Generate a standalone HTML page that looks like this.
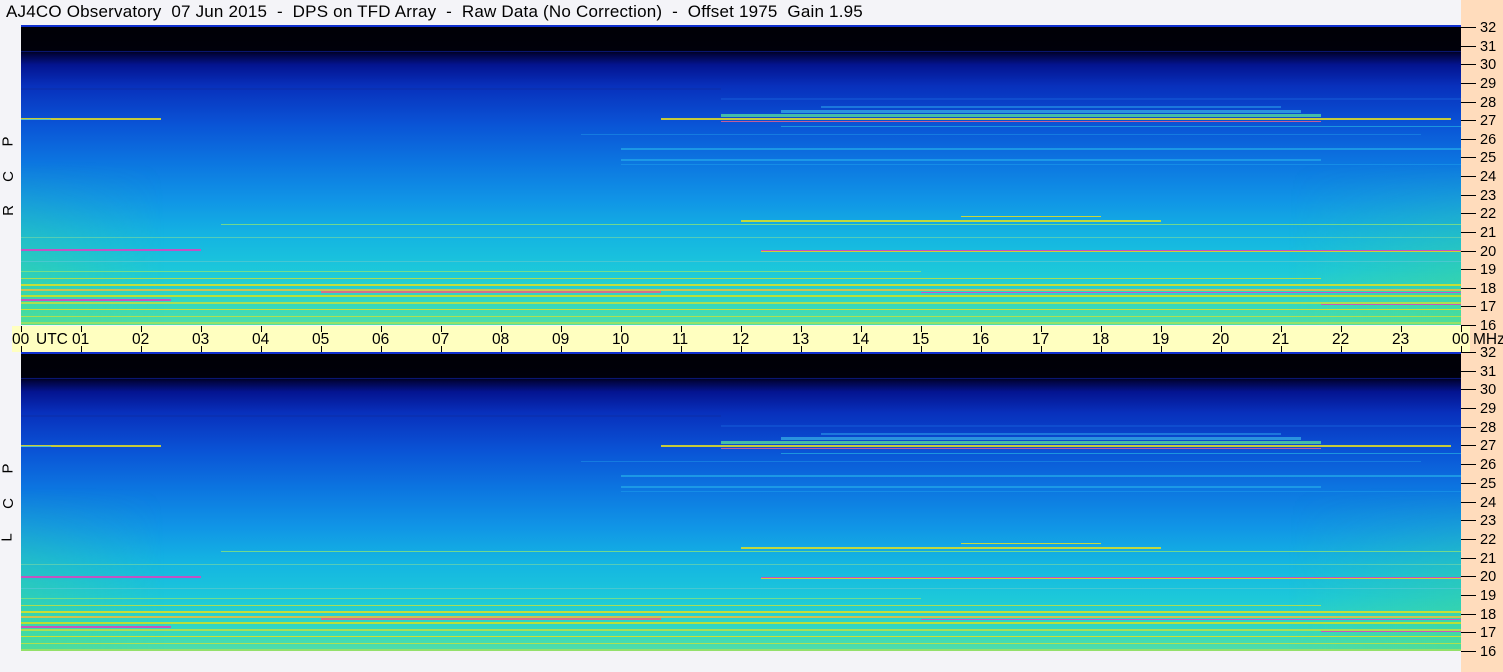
<!DOCTYPE html>
<html><head><meta charset="utf-8"><style>
html,body{margin:0;padding:0}
body{width:1503px;height:672px;background:#f4f4f8;position:relative;overflow:hidden;font-family:"Liberation Sans",sans-serif;}
.title{position:absolute;left:6px;top:2px;font-size:17px;color:#000;white-space:pre;letter-spacing:0.2px}
.right{position:absolute;left:1461px;top:0;width:42px;height:672px;background:#ffdcbc}
.panel{position:absolute;left:21px;width:1440px;overflow:hidden;
background:
linear-gradient(180deg,#000006 0%,#00000a 8%,#010440 9.5%,#041490 13%,#0830bc 20%,#0a54d6 33%,#0c74e0 45%,#1094e6 58%,#14b4e2 70%,#1cc8da 82%,#34d8c0 93%,#50dea8 100%);}
.ov{position:absolute;left:0;top:45%;width:100%;height:55%;background:linear-gradient(90deg,rgba(80,220,120,0.35) 0%,rgba(0,0,0,0) 10%,rgba(0,0,0,0) 88%,rgba(80,220,120,0.35) 100%);
-webkit-mask-image:linear-gradient(180deg,transparent 0%,#000 70%);mask-image:linear-gradient(180deg,transparent 0%,#000 70%)}
.l{position:absolute;height:2px}
.yl{position:absolute;left:12px;top:326px;width:1458px;height:26px;background:#ffffc0}
.tk{position:absolute;width:1px;background:#000}
.tl{position:absolute;top:331px;font-size:15.5px;color:#000}
.fl{position:absolute;left:1480px;font-size:14.5px;color:#000}
.ft{position:absolute;left:1461px;width:15px;height:1px;background:#000}
.side{position:absolute;left:3px;font-size:15px;color:#000;transform:rotate(-90deg);transform-origin:center}
.blue{position:absolute;left:21px;width:1440px;height:2px;background:#1030d0}
</style></head><body>
<div class="title">AJ4CO Observatory  07 Jun 2015  -  DPS on TFD Array  -  Raw Data (No Correction)  -  Offset 1975  Gain 1.95</div>
<div class="right"></div>
<div class="panel" id="p1" style="top:26px;height:299px"></div>
<div class="panel" id="p2" style="top:353px;height:298px"></div>
<div class="blue" style="top:25px"></div>
<div class="blue" style="top:352px"></div>
<div class="yl"></div>
<div id="ax"></div>
<div class="side" style="top:133px">P</div>
<div class="side" style="top:168px">C</div>
<div class="side" style="top:202px">R</div>
<div class="side" style="top:460px">P</div>
<div class="side" style="top:495px">C</div>
<div class="side" style="top:529px">L</div>
<script>
var ax=document.getElementById('ax'),h='';
for(var i=0;i<=24;i++){var x=21+i*60;
h+='<div class="tk" style="left:'+x+'px;top:326px;height:6px"></div><div class="tk" style="left:'+x+'px;top:346px;height:6px"></div>';
var lab=(i==24?'00':(i<10?'0'+i:''+i));
h+='<div class="tl" style="left:'+(x-9)+'px">'+lab+'</div>';}
h+='<div class="tl" style="left:36px">UTC</div><div class="tl" style="left:1473px">MHz</div>';
[[27,325],[352,651]].forEach(function(r){var a=r[0],b=r[1];
for(var f=32;f>=16;f--){var y=a+(32-f)*(b-a)/16;
h+='<div class="ft" style="top:'+Math.round(y)+'px"></div>';
if(!(f==16&&a==27)) h+='<div class="fl" style="top:'+Math.round(y-7)+'px">'+f+'</div>';}});
h+='<div class="fl" style="top:318px">16</div>';
ax.innerHTML=h;
var L=[
[25,0,1440,'#0a1a80',1],[92,0,140,'#e8e020',2],[92,640,1430,'#e8e020',2],[88,700,1300,'#50d0a0',3],[84,760,1280,'#30a0e0',3],[80,800,1260,'#2080e0',2],[95,700,1300,'#e06090',1],
[72,700,1440,'#1050d0',2],[100,760,1440,'#20a0e0',1],[108,560,1400,'#1880e0',1],[122,600,1440,'#20a0e8',2],[133,600,1300,'#20a0e8',2],[138,600,1440,'#1890e8',1],
[62,0,700,'#0a30b0',2],[93,0,30,'#40c0e0',1],
[194,720,1140,'#e0e020',2],[190,940,1080,'#e8e020',1],[198,200,1440,'#80e080',1],[211,0,1440,'#60d0b0',1],
[223,0,180,'#e040c0',2],[224,740,1440,'#e040c0',1],[225,740,1440,'#e8d020',1],[235,0,1440,'#50c8d0',1],
[245,0,900,'#80e080',1],[252,0,1300,'#c0e040',1],[258,0,1440,'#e0e020',2],[263,0,1440,'#e8c040',2],[265,300,640,'#f06080',2],[266,900,1440,'#e040d0',1],[269,0,1440,'#d0e020',2],
[273,0,150,'#e040c0',2],[276,0,1440,'#c0e040',2],[278,1300,1440,'#e040c0',1],[283,0,1440,'#e0e020',1],[290,0,1440,'#c0e040',1],[296,0,1440,'#a0e060',2]];
['p1','p2'].forEach(function(id){var p=document.getElementById(id),s='<div class="ov"></div>';
L.forEach(function(l){s+='<div class="l" style="top:'+l[0]+'px;left:'+l[1]+'px;width:'+(l[2]-l[1])+'px;background:'+l[3]+';height:'+l[4]+'px;opacity:0.85"></div>';});
p.innerHTML=s;});
</script>
</body></html>
